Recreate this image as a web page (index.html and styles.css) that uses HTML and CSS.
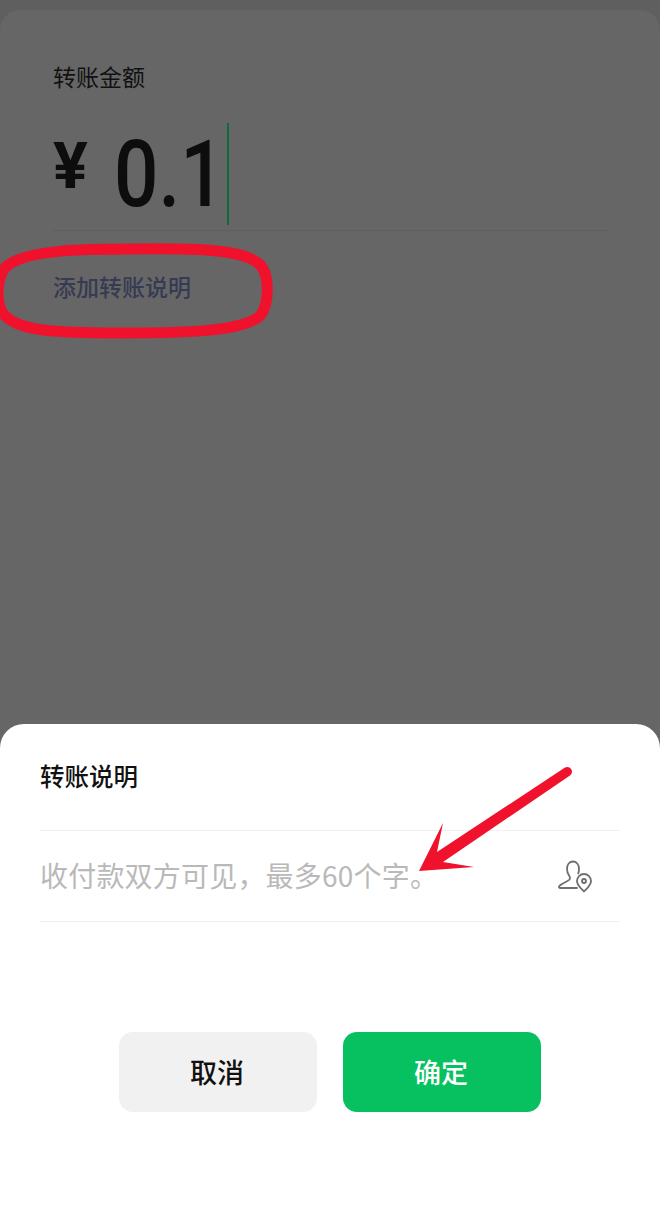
FILE: index.html
```html
<!DOCTYPE html>
<html lang="zh-CN">
<head>
<meta charset="utf-8">
<title>转账说明</title>
<link rel="stylesheet" href="styles.css">
</head>
<body>
<main class="screen">
  <section class="card">
    <div class="card-label">转账金额</div>
    <div class="amount-row">
      <span class="currency">¥</span>
      <span class="amount">0.1</span>
      <span class="caret"></span>
    </div>
    <div class="add-note">添加转账说明</div>
  </section>
  <section class="sheet">
    <h2 class="sheet-title">转账说明</h2>
    <div class="input-row">
      <span class="placeholder">收付款双方可见，最多60个字。</span>
      <svg class="contact-icon" viewBox="0 0 36 34" width="36" height="34" fill="none" stroke="#6f6f6f" stroke-width="1.8" stroke-linejoin="round" stroke-linecap="round" aria-hidden="true">
        <path d="M19 28H2.500c-1.500 0-2-1.200-1-2.200C4 23 10 21.500 11.500 19.500c.8-1.200.5-2.500-.3-3.700C9.800 13.800 9 11.500 9 9 9 4.500 11.500 1.500 15 1.500s6 3 6 7.500c0 1.500-.2 3-.8 4.500"/>
        <path d="M26 31.500c-3-3.200-7-6-7-10.500a7 7 0 0 1 14 0c0 4.500-4 7.300-7 10.500z"/>
        <circle cx="26" cy="21" r="2"/>
      </svg>
    </div>
    <div class="actions">
      <button class="btn btn-cancel" type="button">取消</button>
      <button class="btn btn-ok" type="button">确定</button>
    </div>
  </section>
  <svg class="marks" viewBox="0 0 660 1217" width="660" height="1217" fill="none" aria-hidden="true">
    <path class="mark-line" d="M130 249C200 248 242 250 258 263C270 272 270 303 260 316C242 331 190 333 120 333C60 333 15 332 2 312C-4 300-4 275 8 265C30 250 80 249 130 249Z"/>
    <path class="mark-fill" d="M419 871L443 823L437 852L565 767.500Q569 766 571.500 769.500Q573 773 570 775.500L443 862L474 867Z"/>
  </svg>
</main>
</body>
</html>
```
FILE: styles.css
```css
* { box-sizing: border-box; }
html, body { margin: 0; padding: 0; }
body { width: 660px; height: 1217px; overflow: hidden; background: #5f5f5f; font-family: "Noto Sans CJK SC", "Noto Sans", sans-serif; }
.screen { position: relative; width: 660px; height: 1217px; display: flex; flex-direction: column; padding-top: 10px; }
.card { flex: 1; min-height: 0; background: #666; border-radius: 20px 20px 0 0; padding: 52px 52px 0 53px; margin-bottom: -30px; }
.card-label { font-size: 23px; line-height: 28px; color: #111; }
.amount-row { display: flex; align-items: flex-start; height: 108px; margin-top: 33px; border-bottom: 1px solid #5f5f5f; }
.currency { font-family: Roboto, sans-serif; font-weight: 700; font-size: 65px; line-height: 82px; color: #0d0d0d; width: 61px; margin-top: 2px; }
.amount { font-family: Roboto, sans-serif; font-weight: 500; font-size: 92px; line-height: 92px; color: #0d0d0d; width: 113px; margin-top: 6px; transform: scaleX(.85); transform-origin: left center; white-space: nowrap; }
.caret { width: 2px; height: 102px; background: #0e6b3e; }
.add-note { margin-top: 40px; font-size: 23px; line-height: 30px; font-weight: 500; color: #363a52; }
.sheet { position: relative; height: 493px; flex: none; background: #fff; border-radius: 24px 24px 0 0; padding: 37px 40px 0; }
.sheet-title { margin: 0; font-size: 24.500px; line-height: 30px; font-weight: 500; color: #111; }
.input-row { margin-top: 39px; height: 92px; border-top: 1px solid #f0f0f0; border-bottom: 1px solid #f0f0f0; display: flex; align-items: center; justify-content: space-between; padding-right: 26px; }
.placeholder { font-size: 28px; line-height: 36px; color: #b9b9b9; white-space: nowrap; margin-top: -3px; letter-spacing: .2px; }
.contact-icon { display: block; margin-top: 2px; }
.actions { display: flex; justify-content: center; gap: 26px; margin-top: 110px; }
.btn { width: 198px; height: 80px; border: 0; border-radius: 14px; font-family: inherit; font-size: 27px; font-weight: 500; padding: 0 2px 2px 0; }
.btn-cancel { background: #f1f1f1; color: #111; }
.btn-ok { background: #07c160; color: #fff; }
.marks { position: absolute; left: 0; top: 0; pointer-events: none; }
.mark-line { stroke: #f0122d; stroke-width: 11; }
.mark-fill { fill: #f0122d; }
```
